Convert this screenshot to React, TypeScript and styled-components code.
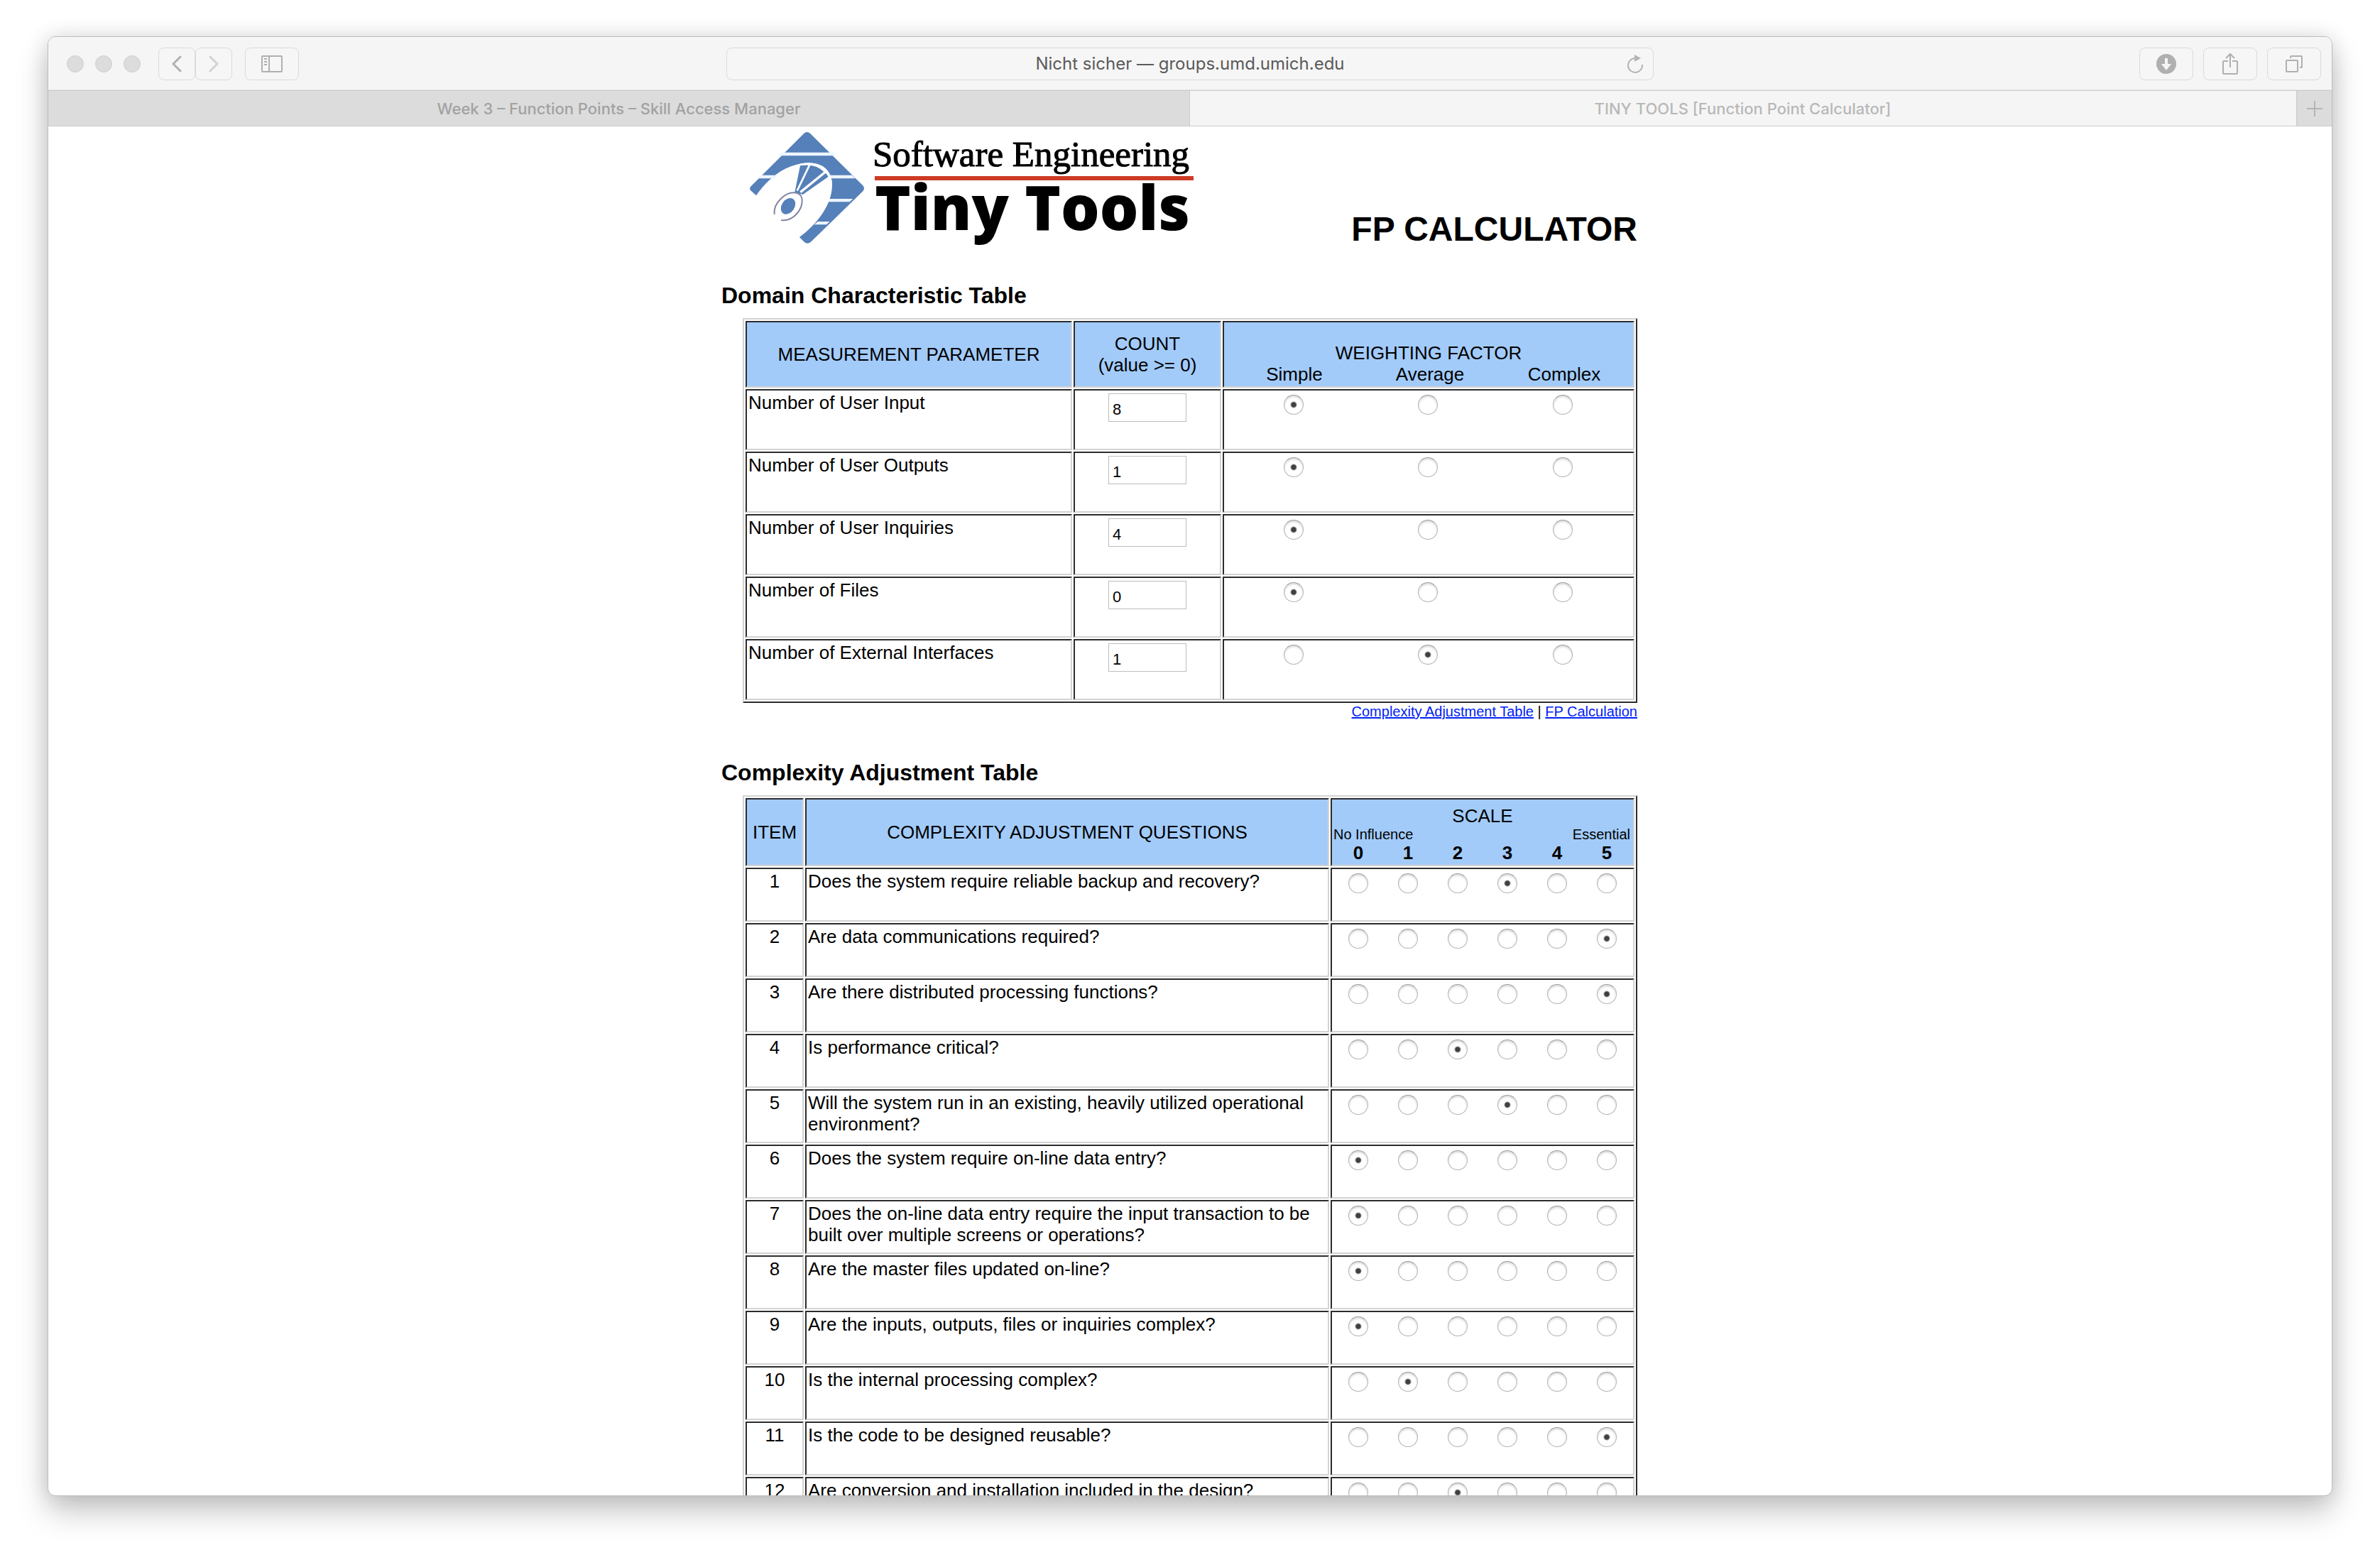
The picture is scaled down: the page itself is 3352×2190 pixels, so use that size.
import React from "react";
import styled, { createGlobalStyle, css } from "styled-components";

const GlobalStyle = createGlobalStyle`
  *, *::before, *::after { box-sizing: border-box; }
  html, body, #root { height: 100%; }
  body { margin: 0; background: #fff; color: #000; font-family: "Liberation Sans", Arial, sans-serif; }
  button { font: inherit; }
`;

const Desktop = styled.div`
  height: 100vh;
  padding: 51px 67px 83px;
  overflow: hidden;
`;

const Window = styled.div`
  height: 100%;
  display: flex;
  flex-direction: column;
  overflow: hidden;
  background: #fff;
  border: 1px solid #bdbdbd;
  border-radius: 11px;
  box-shadow: 0 22px 44px rgba(0, 0, 0, 0.22), 0 0 30px rgba(0, 0, 0, 0.12);
`;

const Toolbar = styled.header`
  flex: none;
  height: 76px;
  display: grid;
  grid-template-columns: 1fr 1306px 1fr;
  align-items: center;
  padding: 0 15px;
  background: #f5f5f5;
  border-bottom: 1px solid #cbcbcb;
  box-shadow: inset 0 -1px #e6e6e6;
`;

const ToolGroup = styled.div<{ $end?: boolean }>`
  display: flex;
  align-items: center;
  gap: ${(p) => (p.$end ? "14px" : "0")};
  justify-content: ${(p) => (p.$end ? "flex-end" : "flex-start")};
`;

const Lights = styled.div`
  display: flex;
  gap: 16px;
  margin: 0 25px 0 11px;
`;

const Light = styled.button`
  width: 24px;
  height: 24px;
  padding: 0;
  border: 1px solid #cfcfcf;
  border-radius: 50%;
  background: #dcdcdc;
`;

const ToolButton = styled.button<{ $narrow?: boolean; $apart?: boolean; $faded?: boolean }>`
  width: ${(p) => (p.$narrow ? "52px" : "76px")};
  height: 46px;
  margin-left: ${(p) => (p.$apart ? "18px" : "0")};
  padding: 0;
  display: grid;
  place-items: center;
  background: #f6f6f6;
  border: 1px solid #dadada;
  border-radius: 8px;
  color: ${(p) => (p.$faded ? "#d2d2d2" : "#b0b0b0")};
`;

const AddressBar = styled.div`
  height: 46px;
  display: grid;
  grid-template-columns: 50px 1fr 50px;
  align-items: center;
  background: #f6f6f6;
  border: 1px solid #dadada;
  border-radius: 8px;
`;

const Address = styled.span`
  grid-column: 2;
  text-align: center;
  font: 24px/30px Inter, sans-serif;
  color: #5a5a5a;
`;

const BareButton = styled.button`
  display: grid;
  place-items: center;
  padding: 0;
  border: 0;
  background: none;
  color: #b4b4b4;
`;

const TabBar = styled.nav`
  flex: none;
  height: 50px;
  display: grid;
  grid-template-columns: 1608fr 1558fr 50px;
  border-bottom: 1px solid #cbcbcb;
`;

const Tab = styled.button<{ $active?: boolean }>`
  padding: 0;
  border: 0;
  border-right: 1px solid ${(p) => (p.$active ? "#f5f5f5" : "#cbcbcb")};
  background: ${(p) => (p.$active ? "#f5f5f5" : "#dcdcdc")};
  color: ${(p) => (p.$active ? "#b8b8b8" : "#a2a2a2")};
  font: 500 22px/28px Inter, sans-serif;
`;

const NewTab = styled(BareButton)`
  background: #dcdcdc;
  border-left: 2px solid #d0d0d0;
`;

const Page = styled.main`
  flex: 1;
  min-height: 0;
  overflow: hidden;
`;

const Sheet = styled.div`
  width: 1320px;
  margin: 0 auto;
  padding-right: 30px;
`;

const Masthead = styled.div`
  display: flex;
  justify-content: space-between;
  align-items: flex-end;
  height: 176px;
  padding-left: 36px;
`;

const LogoArt = styled.svg`
  flex: none;
  width: 640px;
  height: 170px;
`;

const PageTitle = styled.h1`
  margin: 0;
  font-size: 48px;
  line-height: 62px;
`;

const SectionTitle = styled.h2`
  margin: 0;
  font-size: 32px;
  line-height: 36px;
`;

const Section = styled.section<{ $gap: number }>`
  padding-top: ${(p) => p.$gap}px;
`;

const GridTable = styled.table`
  width: 1260px;
  margin: 14px 0 0 30px;
  table-layout: fixed;
  border: 2px solid;
  border-color: #d3d3d3 #2c2c2e #2c2c2e #d3d3d3;
  border-collapse: separate;
  border-spacing: 2px;
  font-size: 26px;
  line-height: 30px;
`;

const Column = styled.col<{ $width: number }>`
  width: ${(p) => p.$width}px;
`;

const bevel = css`
  border: 2px solid;
  border-color: #2c2c2e #d3d3d3 #d3d3d3 #2c2c2e;
  padding: 2px;
`;

const HeadCell = styled.th<{ $height: number; $low?: boolean }>`
  ${bevel}
  height: ${(p) => p.$height}px;
  background: #a2cbfa;
  font-weight: 400;
  vertical-align: ${(p) => (p.$low ? "bottom" : "middle")};
`;

const Cell = styled.td<{ $height: number; $center?: boolean }>`
  ${bevel}
  height: ${(p) => p.$height}px;
  vertical-align: top;
  text-align: ${(p) => (p.$center ? "center" : "left")};
`;

const Options = styled.div<{ $columns: string }>`
  display: grid;
  grid-template-columns: ${(p) => p.$columns};
  justify-items: center;
`;

const ScaleEnds = styled.div`
  display: flex;
  justify-content: space-between;
  font-size: 20px;
  line-height: 22px;
  padding-right: 2px;
`;

const Radio = styled.input`
  appearance: none;
  width: 28px;
  height: 28px;
  margin: 4px 0 0;
  border: 1px solid #b4b4b4;
  border-top-color: #9c9c9c;
  border-radius: 50%;
  box-shadow: inset 0 2px 3px rgba(0, 0, 0, 0.16);
  background: #fff;
  &:checked {
    background: radial-gradient(circle, #404040 0 3px, #fff 5px);
  }
`;

const Count = styled.input`
  display: block;
  width: 110px;
  height: 40px;
  margin: 2px auto 0;
  padding: 6px 5px 0;
  border: 1px solid #bdbdbd;
  font: 22px/26px "Liberation Sans", Arial, sans-serif;
`;

const Jumps = styled.p`
  margin: 0;
  text-align: right;
  font-size: 20px;
  line-height: 24px;
`;

const Jump = styled.a`
  color: #0021f5;
`;

const Logo = () => (
  <LogoArt viewBox="0 0 640 170" role="img" aria-label="Software Engineering Tiny Tools">
    <g transform="translate(-12 -8) scale(0.3333)">
      <path
        fill="#5580b9"
        d="M276 37Q290 23 304 37L526 256Q536 268 526 280L306 494Q291 506 278 494L258 474C325 425 398 340 396 250C394 195 360 160 295 160C200 165 130 220 75 298L51 276Q45 268 53 259Z"
      />
      <g fill="#edf5fc">
        <path d="M182 116H398L412 130H168Z" />
        <path d="M94 212H168L152 226H80Z" />
        <path d="M385 212H480L494 226H388Z" />
        <path d="M384 312H484L470 325H378Z" />
        <path d="M336 408H386L372 421H320Z" />
      </g>
      <path fill="#5580b9" d="M261 172Q325 160 364 200L384 216L272 294L238 284Z" />
      <g fill="none" stroke="#fff">
        <path strokeWidth="8" d="M258 168Q335 155 368 196Q384 212 392 240" />
        <path strokeWidth="8" d="M302 166L248 278" />
        <path strokeWidth="10" d="M368 198L262 284" />
      </g>
      <path
        fill="#fff"
        stroke="#8086a0"
        strokeWidth="6"
        d="M152 378C146 332 198 278 246 287C282 296 272 350 244 378C226 397 202 405 180 402"
      />
      <ellipse cx="210" cy="343" rx="27" ry="37" fill="#5580b9" transform="rotate(35 210 343)" />
    </g>
    <text x="177" y="50" fontFamily="'Liberation Serif', serif" fontSize="51" stroke="#000" strokeWidth="1">
      Software Engineering
    </text>
    <rect x="180" y="64" width="449" height="6" fill="#cd3b27" />
    <text x="180" y="140" fontFamily="'Open Sans', sans-serif" fontWeight="800" fontSize="86">
      Tiny Tools
    </text>
  </LogoArt>
);

const stroke = { fill: "none", stroke: "currentColor", strokeWidth: 2 } as const;

const BackIcon = () => (
  <svg width="14" height="24" viewBox="0 0 14 24" {...stroke} strokeWidth={3} strokeLinecap="round">
    <path d="M12 2L2 12L12 22" />
  </svg>
);
const ForwardIcon = () => (
  <svg width="14" height="24" viewBox="0 0 14 24" {...stroke} strokeWidth={3} strokeLinecap="round">
    <path d="M2 2L12 12L2 22" />
  </svg>
);
const SidebarIcon = () => (
  <svg width="30" height="24" viewBox="0 0 30 24" {...stroke}>
    <rect x="1" y="1" width="28" height="22" rx="1" />
    <path d="M11 1V23M4 5H8M4 9H8M4 13H8" />
  </svg>
);
const DownloadIcon = () => (
  <svg width="28" height="28" viewBox="0 0 28 28">
    <circle cx="14" cy="14" r="14" fill="currentColor" />
    <path d="M12 6H16V14H21L14 23L7 14H12Z" fill="#f6f6f6" />
  </svg>
);
const ShareIcon = () => (
  <svg width="22" height="34" viewBox="0 0 22 34" {...stroke}>
    <path d="M8 13H2Q1 13 1 14V30Q1 31 2 31H20Q21 31 21 30V14Q21 13 20 13H14M11 22V4M5 9L11 3L17 9" />
  </svg>
);
const OverviewIcon = () => (
  <svg width="24" height="24" viewBox="0 0 24 24" {...stroke}>
    <rect x="1" y="7" width="16" height="16" rx="1" />
    <path d="M7 4V2Q7 1 8 1H22Q23 1 23 2V16Q23 17 22 17H20" />
  </svg>
);
const ReloadIcon = () => (
  <svg width="24" height="28" viewBox="0 0 24 28" {...stroke}>
    <path d="M12 6A10 10 0 1 0 22 15" />
    <path d="M11 1L20 6L11 11Z" fill="currentColor" stroke="none" />
  </svg>
);
const PlusIcon = () => (
  <svg width="22" height="22" viewBox="0 0 22 22" {...stroke}>
    <path d="M11 0V22M0 11H22" />
  </svg>
);

const parameters = [
  { name: "Number of User Input", count: 8, weight: 0 },
  { name: "Number of User Outputs", count: 1, weight: 0 },
  { name: "Number of User Inquiries", count: 4, weight: 0 },
  { name: "Number of Files", count: 0, weight: 0 },
  { name: "Number of External Interfaces", count: 1, weight: 1 },
];
const weights = ["Simple", "Average", "Complex"];
const scale = [0, 1, 2, 3, 4, 5];
const questions: [string, number][] = [
  ["Does the system require reliable backup and recovery?", 3],
  ["Are data communications required?", 5],
  ["Are there distributed processing functions?", 5],
  ["Is performance critical?", 2],
  ["Will the system run in an existing, heavily utilized operational environment?", 3],
  ["Does the system require on-line data entry?", 0],
  ["Does the on-line data entry require the input transaction to be built over multiple screens or operations?", 0],
  ["Are the master files updated on-line?", 0],
  ["Are the inputs, outputs, files or inquiries complex?", 0],
  ["Is the internal processing complex?", 1],
  ["Is the code to be designed reusable?", 5],
  ["Are conversion and installation included in the design?", 2],
];

const weightLabelColumns = "194px 188px 190px";
const weightColumns = "192px 186px 194px";
const scaleColumns = "repeat(6, 70px)";

export default function App() {
  return (
    <>
      <GlobalStyle />
      <Desktop>
        <Window>
          <Toolbar>
            <ToolGroup>
              <Lights>
                <Light aria-label="Close" />
                <Light aria-label="Minimize" />
                <Light aria-label="Zoom" />
              </Lights>
              <ToolButton $narrow aria-label="Back"><BackIcon /></ToolButton>
              <ToolButton $narrow $faded aria-label="Forward"><ForwardIcon /></ToolButton>
              <ToolButton $apart aria-label="Sidebar"><SidebarIcon /></ToolButton>
            </ToolGroup>
            <AddressBar>
              <Address>Nicht sicher — groups.umd.umich.edu</Address>
              <BareButton aria-label="Reload"><ReloadIcon /></BareButton>
            </AddressBar>
            <ToolGroup $end>
              <ToolButton aria-label="Downloads"><DownloadIcon /></ToolButton>
              <ToolButton aria-label="Share"><ShareIcon /></ToolButton>
              <ToolButton aria-label="Show all tabs"><OverviewIcon /></ToolButton>
            </ToolGroup>
          </Toolbar>
          <TabBar>
            <Tab>Week 3 – Function Points – Skill Access Manager</Tab>
            <Tab $active>TINY TOOLS [Function Point Calculator]</Tab>
            <NewTab aria-label="New tab"><PlusIcon /></NewTab>
          </TabBar>
          <Page>
            <Sheet>
              <Masthead>
                <Logo />
                <PageTitle>FP CALCULATOR</PageTitle>
              </Masthead>
              <Section $gap={44}>
                <SectionTitle>Domain Characteristic Table</SectionTitle>
                <GridTable>
                  <colgroup>
                    <Column $width={460} />
                    <Column $width={208} />
                    <Column $width={580} />
                  </colgroup>
                  <thead>
                    <tr>
                      <HeadCell $height={94}>MEASUREMENT PARAMETER</HeadCell>
                      <HeadCell $height={94}>COUNT<br />(value &gt;= 0)</HeadCell>
                      <HeadCell $height={94} $low>
                        WEIGHTING FACTOR
                        <Options $columns={weightLabelColumns}>
                          {weights.map((w) => <span key={w}>{w}</span>)}
                        </Options>
                      </HeadCell>
                    </tr>
                  </thead>
                  <tbody>
                    {parameters.map((p) => (
                      <tr key={p.name}>
                        <Cell $height={86}>{p.name}</Cell>
                        <Cell $height={86} $center>
                          <Count defaultValue={p.count} aria-label={p.name} />
                        </Cell>
                        <Cell $height={86}>
                          <Options $columns={weightColumns}>
                            {weights.map((w, i) => (
                              <Radio key={w} type="radio" name={p.name} aria-label={`${p.name}: ${w}`} defaultChecked={i === p.weight} />
                            ))}
                          </Options>
                        </Cell>
                      </tr>
                    ))}
                  </tbody>
                </GridTable>
                <Jumps>
                  <Jump href="#complexity">Complexity Adjustment Table</Jump> | <Jump href="#fp">FP Calculation</Jump>
                </Jumps>
              </Section>
              <Section $gap={56} id="complexity">
                <SectionTitle>Complexity Adjustment Table</SectionTitle>
                <GridTable>
                  <colgroup>
                    <Column $width={82} />
                    <Column $width={738} />
                    <Column $width={428} />
                  </colgroup>
                  <thead>
                    <tr>
                      <HeadCell $height={96}>ITEM</HeadCell>
                      <HeadCell $height={96}>COMPLEXITY ADJUSTMENT QUESTIONS</HeadCell>
                      <HeadCell $height={96} $low>
                        SCALE
                        <ScaleEnds>
                          <span>No Influence</span>
                          <span>Essential</span>
                        </ScaleEnds>
                        <Options $columns={scaleColumns}>
                          {scale.map((n) => <b key={n}>{n}</b>)}
                        </Options>
                      </HeadCell>
                    </tr>
                  </thead>
                  <tbody>
                    {questions.map(([question, value], row) => (
                      <tr key={question}>
                        <Cell $height={76} $center>{row + 1}</Cell>
                        <Cell $height={76}>{question}</Cell>
                        <Cell $height={76}>
                          <Options $columns={scaleColumns}>
                            {scale.map((n) => (
                              <Radio key={n} type="radio" name={`question-${row + 1}`} aria-label={`${question} ${n}`} defaultChecked={n === value} />
                            ))}
                          </Options>
                        </Cell>
                      </tr>
                    ))}
                  </tbody>
                </GridTable>
              </Section>
            </Sheet>
          </Page>
        </Window>
      </Desktop>
    </>
  );
}
